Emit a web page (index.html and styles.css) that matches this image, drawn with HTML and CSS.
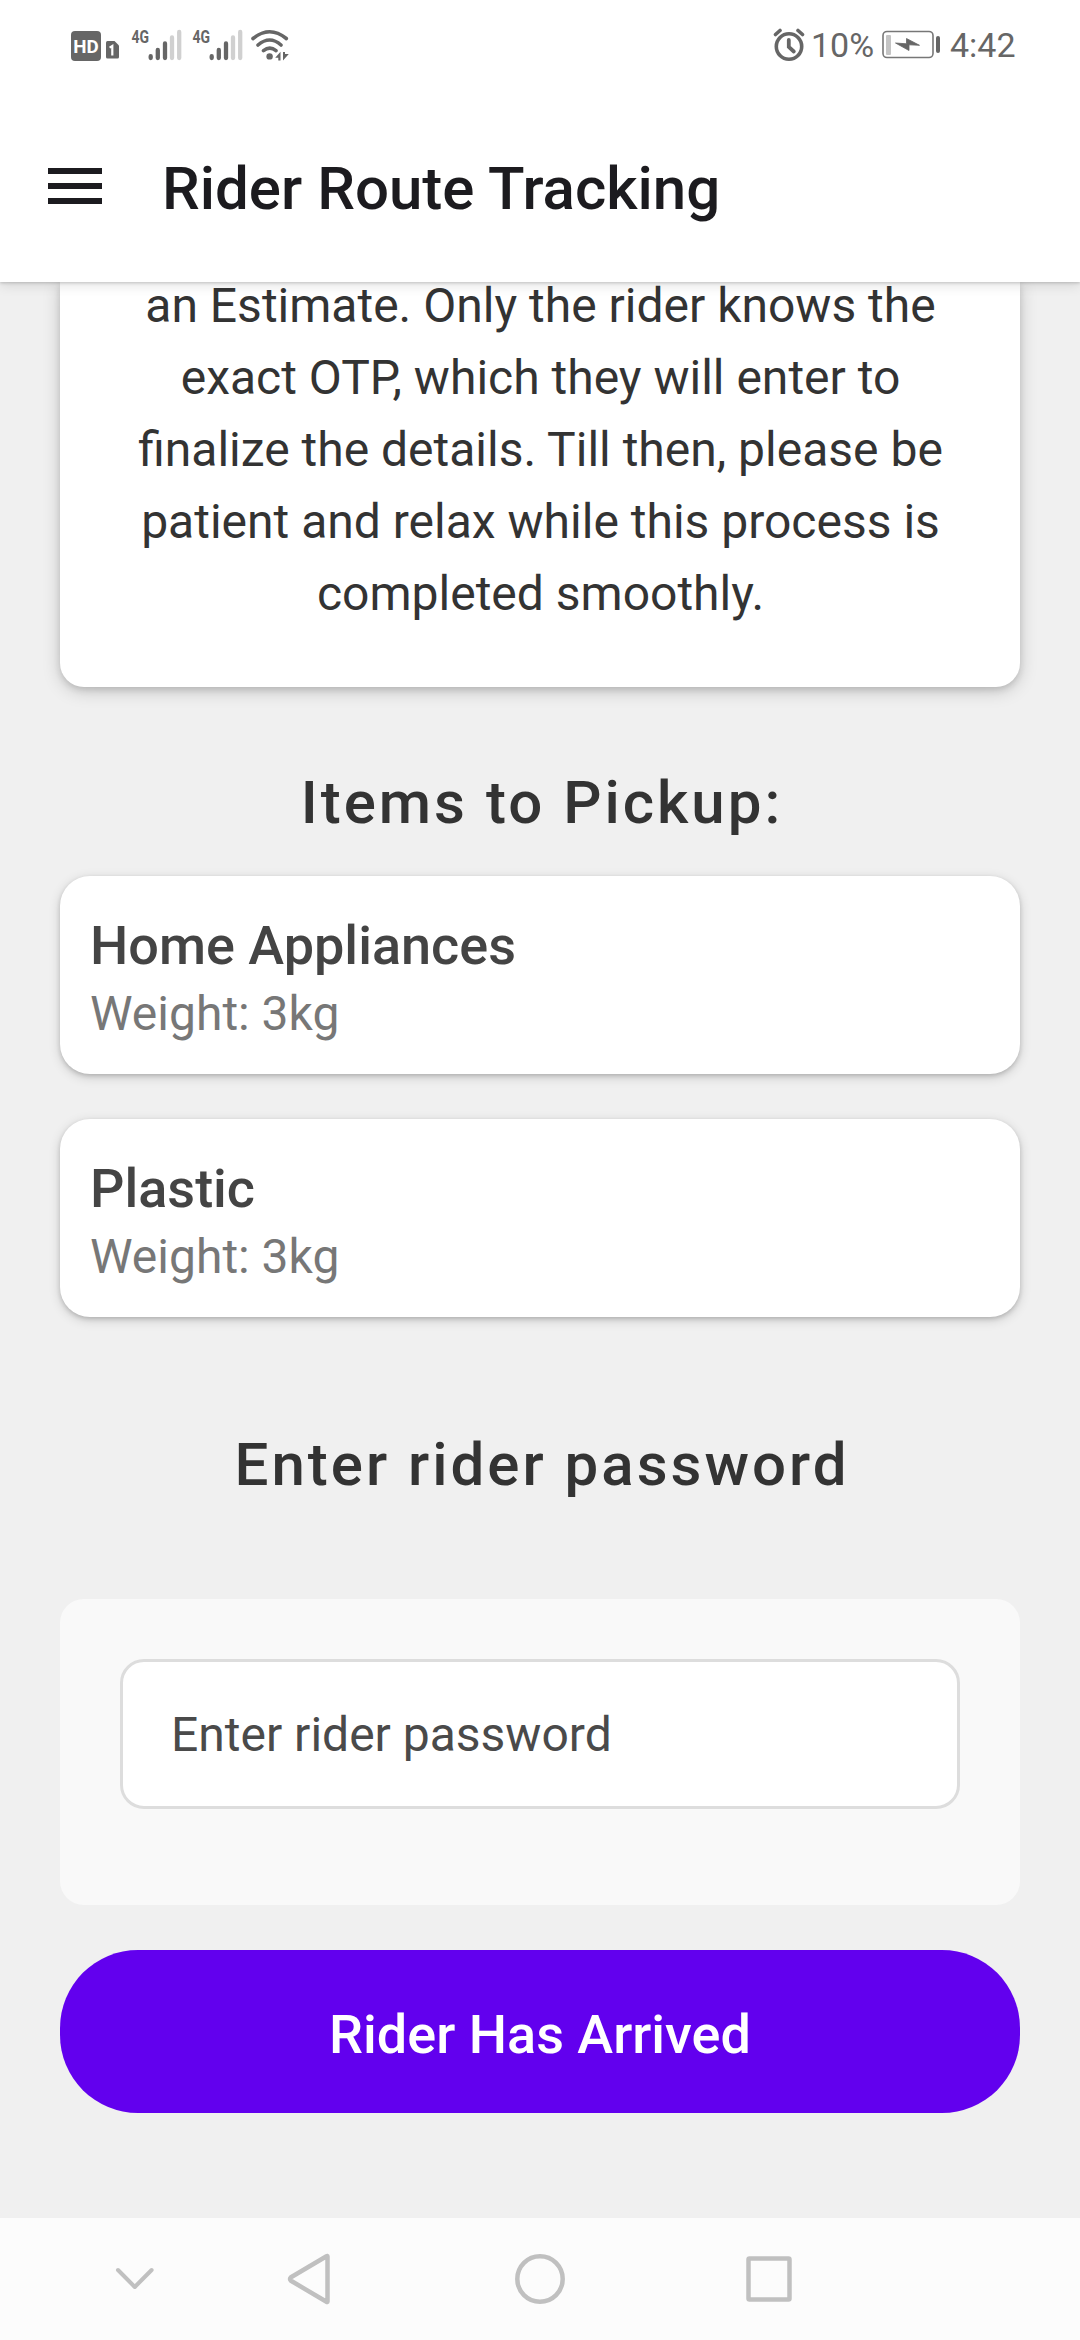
FILE: index.html
```html
<!DOCTYPE html>
<html lang="en">
<head>
<meta charset="utf-8">
<title>Rider Route Tracking</title>
<link rel="stylesheet" href="styles.css">
</head>
<body>
<div class="screen">
  <header class="top">
    <div class="status">
      <svg class="status-left" width="230" height="60" viewBox="60 15 230 60">
        <rect x="71" y="31" width="30" height="30" rx="4" fill="#666"/>
        <text x="73.2" y="52.8" class="hd" textLength="25.5" lengthAdjust="spacingAndGlyphs">HD</text>
        <path d="M107.500 41h7l4.500 4.500v11.500a1.500 1.500 0 0 1-1.500 1.500h-10a1.500 1.500 0 0 1-1.500-1.500v-14.500a1.500 1.500 0 0 1 1.500-1.500z" fill="#666"/>
        <path d="M109.600 47.600l2.700-1.600v9.500" fill="none" stroke="#fff" stroke-width="2.200"/>
        <g id="signal">
          <text x="131.500" y="43" class="net" textLength="17.500" lengthAdjust="spacingAndGlyphs">4G</text>
          <g stroke-width="4.300" stroke-linecap="round" stroke="#666">
            <path d="M150.700 56.200v1.800M157.800 50v8M165 43.500v14.500"/>
            <path d="M172 37.500v20.500M179.200 32v26" stroke="#d0d0d0"/>
          </g>
        </g>
        <use href="#signal" x="61"/>
        <g fill="none" stroke="#666" stroke-width="3.600" stroke-linecap="round">
          <path d="M253 38.500q16.600-13.500 33.300 0M258 45q11.700-10 23 0M263.500 50.700q6.300-5 12.500 0"/>
        </g>
        <circle cx="269.600" cy="56.400" r="3.200" fill="#666"/>
        <path d="M275.200 57.800l5.300-6v8.700h-2.200v-2.700zM283 52h2v2h3.800l-5.800 6.500z" fill="#666"/>
      </svg>
      <div class="status-right">
        <svg width="32" height="34" viewBox="772 28 32 34" fill="none" stroke="#666">
          <circle cx="788" cy="46.500" r="12.700" stroke-width="3.600"/>
          <path d="M774.500 34.500l4.500-4M801.500 34.500l-4.500-4" stroke-width="3.600" stroke-linecap="round"/>
          <path d="M787.800 40v7l5 4.500" stroke-width="3.800" stroke-linecap="round"/>
        </svg>
        <span class="percent">10%</span>
        <svg class="battery" width="60" height="30" viewBox="880 31 60 30">
          <rect x="882" y="32.500" width="50" height="26" rx="4" fill="none" stroke="#777" stroke-width="1.600"/>
          <rect x="885" y="36" width="5" height="20" rx="1" fill="#c4c4c4"/>
          <path d="M894.500 44l11 .800v-5.300l13 6.800-10.500-.500v5.700z" fill="#666" stroke="#666" stroke-width=".8"/>
          <rect x="935" y="37" width="4" height="17" rx="2" fill="#666"/>
        </svg>
        <span class="clock">4:42</span>
      </div>
    </div>
    <div class="appbar">
      <svg class="menu" width="54" height="36" viewBox="0 0 54 36" fill="#1c1b1f"><path d="M0 0h54v6H0zM0 15h54v6H0zM0 30h54v6H0z"/></svg>
      <h1 class="title">Rider Route Tracking</h1>
    </div>
  </header>

  <main class="content">
    <section class="notice">
      <p class="notice-text">an Estimate. Only the rider knows the<br>exact OTP, which they will enter to<br>finalize the details. Till then, please be<br>patient and relax while this process is<br>completed smoothly.</p>
    </section>
    <h2 class="heading items-heading">Items to Pickup:</h2>
    <div class="items">
      <article class="item"><h3 class="item-name">Home Appliances</h3><p class="item-weight">Weight: 3kg</p></article>
      <article class="item"><h3 class="item-name">Plastic</h3><p class="item-weight">Weight: 3kg</p></article>
    </div>
    <h2 class="heading password-heading">Enter rider password</h2>
    <div class="panel">
      <input class="password" type="text" placeholder="Enter rider password">
    </div>
    <button class="arrived" type="button">Rider Has Arrived</button>
  </main>

  <nav class="navbar">
    <svg width="1080" height="122" viewBox="0 2218 1080 122" fill="none" stroke="#c0c0c0" stroke-width="4.500" stroke-linejoin="round" stroke-linecap="round">
      <path d="M118 2270l16.800 17 16.800-17" stroke-width="4"/>
      <path d="M327.500 2256.500v45q0 1-1 .3l-35.500-21q-2-1.800 0-3.600l35.500-21q1-.7 1 .3z"/>
      <circle cx="540" cy="2279" r="22.700"/>
      <rect x="748.500" y="2258.500" width="41" height="41" rx="1"/>
    </svg>
  </nav>
</div>
</body>
</html>
```
FILE: styles.css
```css
* { box-sizing: border-box; }
body { margin: 0; font-family: Roboto, "Noto Sans", sans-serif; }
h1, h2, h3, p { margin: 0; font-weight: 500; }

.screen {
  width: 1080px;
  height: 2340px;
  display: flex;
  flex-direction: column;
  background: #f0f0f0;
  overflow: hidden;
}

.top {
  height: 282px;
  flex: none;
  background: #fff;
  position: relative;
  z-index: 1;
  box-shadow: 0 1px 3px rgba(0, 0, 0, .18), 0 3px 12px rgba(0, 0, 0, .12);
}
.status {
  height: 90px;
  padding: 15px 65px 0 60px;
  display: flex;
  justify-content: space-between;
  align-items: flex-start;
}
.hd { font: 700 18px Roboto, sans-serif; fill: #fff; }
.net { font: 700 18.5px Roboto, sans-serif; fill: #666; }
.status-right {
  height: 60px;
  display: flex;
  align-items: center;
  color: #666;
  font-size: 34px;
  line-height: 62px;
}
.percent { width: 62px; margin-left: 6px; }
.battery { margin-left: 8px; }
.clock { width: 65px; margin-left: 9px; }

.appbar { height: 192px; padding: 0 48px; display: flex; align-items: flex-start; }
.menu { margin-top: 78px; }
.title { margin: 59px 0 0 60px; font-size: 60px; line-height: 80px; color: #1c1b1f; }

.content { flex: 1; padding: 0 60px; display: flex; flex-direction: column; }
.notice {
  height: 405px;
  flex: none;
  padding: 0 60px 57px;
  display: flex;
  align-items: flex-end;
  justify-content: center;
  background: #fff;
  border-radius: 0 0 24px 24px;
  box-shadow: 0 3px 6px rgba(0, 0, 0, .12), 0 4px 18px rgba(0, 0, 0, .18);
}
.notice-text { padding-left: 1px; font-size: 48px; font-weight: 400; line-height: 72px; text-align: center; color: #333; white-space: nowrap; }
.heading { padding-left: 4px; font-size: 60px; line-height: 80px; letter-spacing: 3px; text-align: center; color: #333; }
.items-heading { margin-top: 76px; }
.items { margin-top: 33px; display: flex; flex-direction: column; gap: 45px; }
.item {
  height: 198px;
  padding: 33px 30px 0;
  background: #fff;
  border-radius: 30px;
  box-shadow: 0 2px 4px rgba(0, 0, 0, .16), 0 3px 12px rgba(0, 0, 0, .16);
}
.item-name { font-size: 54px; line-height: 74px; color: #444; }
.item-weight { font-size: 48px; font-weight: 400; line-height: 62px; color: #777; }
.password-heading { margin-top: 108px; }
.panel { height: 306px; margin-top: 94px; padding: 60px; background: #f9f9f9; border-radius: 24px; }
.password {
  display: block;
  width: 840px;
  height: 150px;
  padding: 0 48px;
  border: 3px solid #ddd;
  border-radius: 24px;
  background: #fff;
  font: 400 48px Roboto, sans-serif;
}
.password::placeholder { color: #4a4a4a; opacity: 1; }
.arrived {
  height: 163px;
  flex: none;
  margin-top: 45px;
  padding: 6px 0 0;
  border: 0;
  border-radius: 78px;
  background: #6200ee;
  color: #fff;
  font: 500 54px Roboto, sans-serif;
}

.navbar { height: 122px; flex: none; background: #fcfcfc; }
.navbar svg { display: block; }
```
